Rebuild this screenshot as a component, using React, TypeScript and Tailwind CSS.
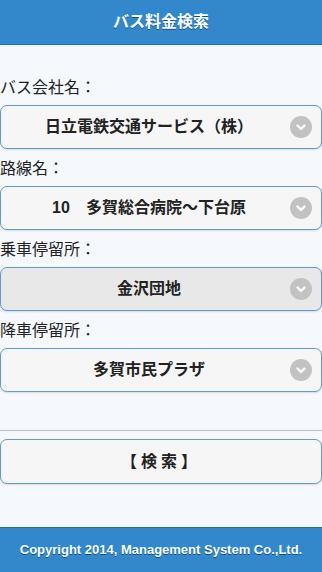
import React from "react";

const fields = [
    { label: "バス会社名：", value: "日立電鉄交通サービス（株）", pressed: false },
    { label: "路線名：", value: "10　多賀総合病院〜下台原", pressed: false },
    { label: "乗車停留所：", value: "金沢団地", pressed: true },
    { label: "降車停留所：", value: "多賀市民プラザ", pressed: false },
];

const jpFont = { fontFamily: '"Helvetica Neue", "Liberation Sans", "Noto Sans CJK JP", sans-serif' };

const Chevron = () => (
    <span className="absolute right-[9px] top-1/2 -translate-y-1/2 flex items-center justify-center w-[22px] h-[22px] rounded-full bg-[#c2c2c2]">
        <svg width="12" height="12" viewBox="0 0 12 12" fill="none">
            <path d="M2.5 4.5 L6 8 L9.5 4.5" stroke="white" strokeWidth="2.4" strokeLinecap="round" strokeLinejoin="round" />
        </svg>
    </span>
);

const App: React.FC = () => {
    return (
        <div className="flex flex-col w-[322px] h-[572px] bg-[#f5f9fd] text-[#333]" style={jpFont}>
            <div className="h-[45px] flex items-center justify-center bg-[#3388cc] border-b border-[#1f6fad]">
                <span className="text-white font-bold text-[16px] [text-shadow:0_1px_0_#005599]">バス料金検索</span>
            </div>
            <div className="flex flex-col flex-1 pt-[32px]">
                {fields.map((f) => (
                    <div key={f.label} className="flex flex-col">
                        <label className="text-[16px] leading-[22px] mb-[6px] text-[#222]">{f.label}</label>
                        <div
                            className={`relative h-[44px] mb-[9px] flex items-center justify-center pl-4 pr-10 rounded-[7px] border border-[#5e9bd3] shadow-[0_1px_2px_rgba(0,0,0,0.12)] ${f.pressed ? "bg-[#e8e8e8]" : "bg-[#f6f6f6]"}`}
                        >
                            <span className="font-bold text-[16px] text-[#222] whitespace-nowrap">{f.value}</span>
                            <Chevron />
                        </div>
                    </div>
                ))}
                {/* separator above the search button */}
                <div className="mt-[29px] border-t border-[#bdbdbd]" />
                <button className="mt-[8px] h-[45px] flex items-center justify-center rounded-[7px] border border-[#5e9bd3] bg-[#f6f6f6] shadow-[0_1px_2px_rgba(0,0,0,0.12)]">
                    <span className="font-bold text-[16px] text-[#222] tracking-[4px]">【検索】</span>
                </button>
            </div>
            <div className="h-[45px] flex items-center justify-center bg-[#3388cc] border-t border-[#1f6fad]">
                <span className="text-white font-bold text-[13px] [text-shadow:0_1px_0_#005599]" style={{ fontFamily: '"Liberation Sans", Arial, sans-serif' }}>
                    Copyright 2014, Management System Co.,Ltd.
                </span>
            </div>
        </div>
    );
};

export default App;
